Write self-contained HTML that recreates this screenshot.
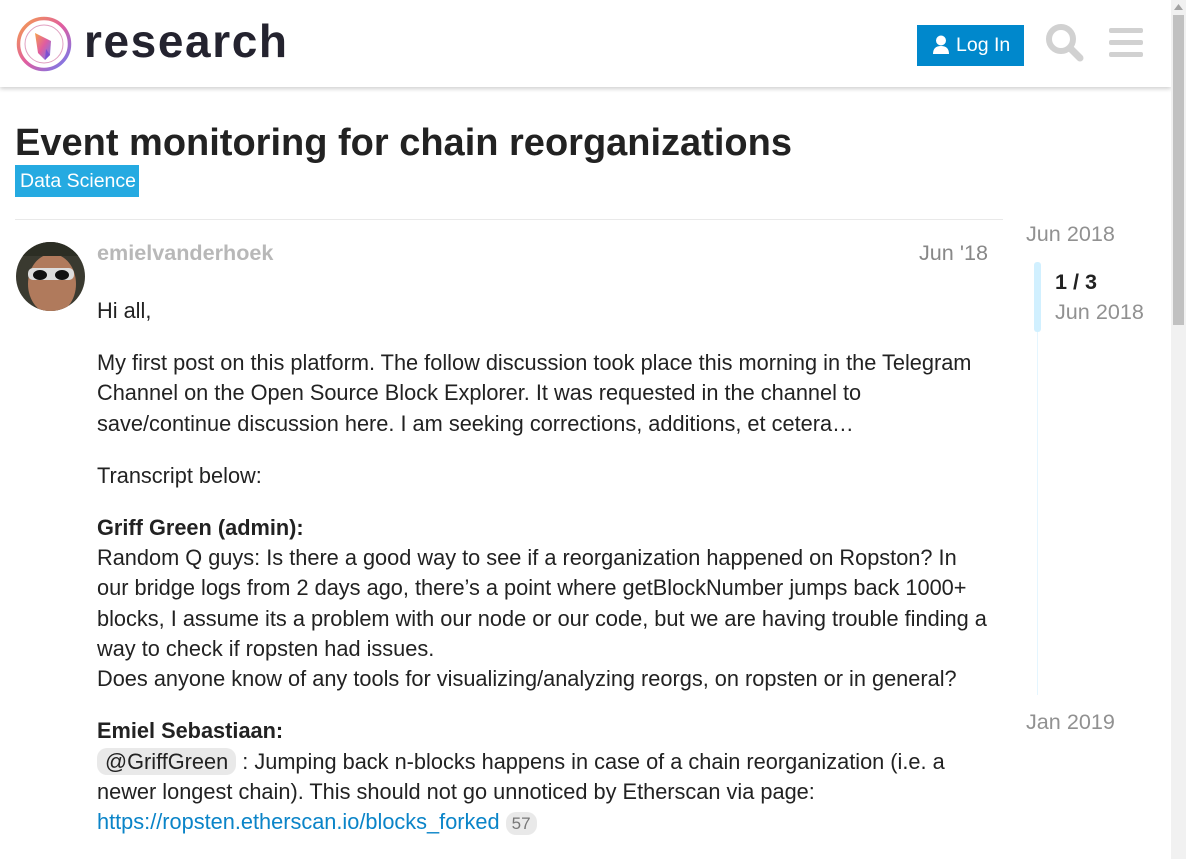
<!DOCTYPE html>
<html><head><meta charset="utf-8"><style>
*{box-sizing:border-box;margin:0;padding:0}
body{width:1186px;height:859px;overflow:hidden;background:#fff;font-family:"Liberation Sans",sans-serif;color:#222;position:relative}
.hdr{position:absolute;left:0;top:0;width:1171px;height:87px;background:#fff;box-shadow:0 2px 4px rgba(0,0,0,.18)}
.a{position:absolute;white-space:nowrap}
.sb{position:absolute;left:1171px;top:0;width:15px;height:859px;background:#f1f1f1}
.thumb{position:absolute;left:1173px;top:15px;width:11px;height:310px;background:#c1c1c1}
.post{position:absolute;left:97px;top:296px;width:893px;font-size:21.75px;line-height:30.3px;color:#222}
.post p{margin-bottom:21.8px}
.mention{background:#e9e9e9;border-radius:10px;padding:1px 8px}
.link{color:#0a84c8}
.cnt{background:#e9e9e9;color:#777;border-radius:10px;font-size:17px;padding:2px 6px}
</style></head><body>
<div class="hdr">
<svg class="a" style="left:16px;top:15px" width="58" height="58" viewBox="0 0 58 58">
<defs><linearGradient id="g" x1="0" y1="0" x2="1" y2="1"><stop offset="0" stop-color="#f5a14b"/><stop offset=".5" stop-color="#e05ca0"/><stop offset="1" stop-color="#6a7df5"/></linearGradient></defs>
<circle cx="28" cy="29" r="25.5" fill="none" stroke="url(#g)" stroke-width="3.5"/>
<circle cx="28" cy="29" r="19" fill="none" stroke="#e0a0c0" stroke-width="1"/>
<path d="M19 18 L35 26 L34 40 L29 45 L22 38 Z" fill="url(#g)"/>
<path d="M29 45 L34 40 L30 34 Z" fill="#7d4fd0"/>
</svg>
<div class="a" style="left:84px;top:14px;font-size:46px;font-weight:bold;color:#24232f;letter-spacing:1.6px">research</div>
<div class="a" style="left:917px;top:25px;width:107px;height:41px;background:#0088cc;color:#fff;font-size:19.5px;line-height:41px;padding-left:39px">Log In</div>
<svg class="a" style="left:932px;top:35px" width="18" height="20" viewBox="0 0 18 20"><circle cx="9" cy="5.5" r="5" fill="#fff"/><path d="M1 19 Q1 11 9 11 Q17 11 17 19 Z" fill="#fff"/></svg>
<svg class="a" style="left:1045px;top:23px" width="40" height="40" viewBox="0 0 40 40"><circle cx="16" cy="16" r="12" fill="none" stroke="#d1d1d1" stroke-width="6"/><path d="M25 25 L35 35" stroke="#d1d1d1" stroke-width="7" stroke-linecap="round"/></svg>
<div class="a" style="left:1109px;top:28px;width:34px;height:5px;background:#d1d1d1;border-radius:2px"></div>
<div class="a" style="left:1109px;top:40px;width:34px;height:5px;background:#d1d1d1;border-radius:2px"></div>
<div class="a" style="left:1109px;top:52px;width:34px;height:5px;background:#d1d1d1;border-radius:2px"></div>
</div>
<div class="a" style="left:15px;top:122px;font-size:38px;font-weight:bold;color:#222">Event monitoring for chain reorganizations</div>
<div class="a" style="left:15px;top:165px;width:124px;height:32px;background:#25aae1;color:#fff;font-size:19.5px;line-height:32px;padding-left:5px">Data Science</div>
<div class="a" style="left:15px;top:219px;width:988px;height:1px;background:#e9e9e9"></div>
<svg class="a" style="left:16px;top:242px" width="69" height="69" viewBox="0 0 69 69">
<defs><clipPath id="c"><circle cx="34.5" cy="34.5" r="34.5"/></clipPath></defs>
<g clip-path="url(#c)"><rect width="69" height="69" fill="#3a3a30"/><ellipse cx="36" cy="42" rx="24" ry="30" fill="#b07a5c"/><rect x="12" y="26" width="46" height="12" rx="5" fill="#ddd"/><ellipse cx="24" cy="33" rx="7" ry="5" fill="#111"/><ellipse cx="46" cy="33" rx="7" ry="5" fill="#111"/><rect y="0" width="69" height="14" fill="#2c2e24"/></g></svg>
<div class="a" style="left:97px;top:240px;font-size:21.6px;font-weight:bold;color:#b8b8b8">emielvanderhoek</div>
<div class="a" style="left:919px;top:240px;font-size:21.6px;color:#888">Jun '18</div>
<div class="post">
<p>Hi all,</p>
<p>My first post on this platform. The follow discussion took place this morning in the Telegram Channel on the Open Source Block Explorer. It was requested in the channel to save/continue discussion here. I am seeking corrections, additions, et cetera…</p>
<p>Transcript below:</p>
<p><b>Griff Green (admin):</b><br>Random Q guys: Is there a good way to see if a reorganization happened on Ropston? In our bridge logs from 2 days ago, there’s a point where getBlockNumber jumps back 1000+ blocks, I assume its a problem with our node or our code, but we are having trouble finding a way to check if ropsten had issues.<br>Does anyone know of any tools for visualizing/analyzing reorgs, on ropsten or in general?</p>
<p><b>Emiel Sebastiaan:</b><br><span class="mention">@GriffGreen</span> : Jumping back n-blocks happens in case of a chain reorganization (i.e. a newer longest chain). This should not go unnoticed by Etherscan via page:<br><span class="link">https://ropsten.etherscan.io/blocks_forked</span> <span class="cnt">57</span></p>
</div>
<div class="a" style="left:1026px;top:221px;font-size:21.6px;color:#919191">Jun 2018</div>
<div class="a" style="left:1037px;top:332px;width:1px;height:363px;background:#e5f6ff"></div>
<div class="a" style="left:1034px;top:262px;width:7px;height:70px;background:#d1f0ff;border-radius:3px"></div>
<div class="a" style="left:1055px;top:269px;font-size:21.6px;font-weight:bold;color:#222">1 / 3</div>
<div class="a" style="left:1055px;top:299px;font-size:21.6px;color:#919191">Jun 2018</div>
<div class="a" style="left:1026px;top:709px;font-size:21.6px;color:#919191">Jan 2019</div>
<div class="sb"></div><div class="thumb"></div>
<svg class="a" style="left:1174px;top:4px" width="9" height="6"><path d="M0 6 L4.5 0 L9 6Z" fill="#a3a3a3"/></svg>
</body></html>
